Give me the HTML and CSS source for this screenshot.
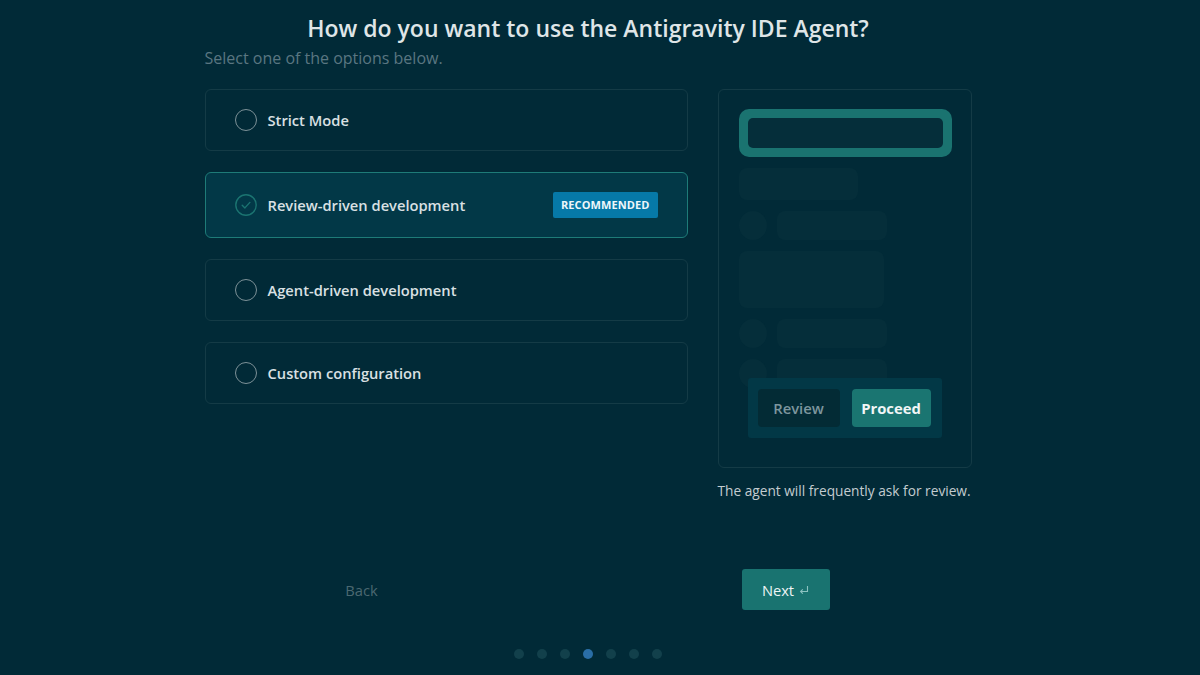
FILE: index.html
```html
<!DOCTYPE html>
<html lang="en">
<head>
<meta charset="utf-8">
<title>Antigravity IDE Agent setup</title>
<link rel="stylesheet" href="styles.css">
</head>
<body>
<main class="page">
  <h1 class="title">How do you want to use the Antigravity IDE Agent?</h1>
  <p class="subtitle">Select one of the options below.</p>

  <div class="content">
    <div class="options">
      <div class="option">
        <span class="radio"></span>
        <span class="label">Strict Mode</span>
      </div>
      <div class="option selected">
        <span class="radio checked">
          <svg viewBox="0 0 22 22" width="22" height="22"><circle cx="11" cy="11" r="10.2" fill="none" stroke="#1b7471" stroke-width="1.4"/><path d="M7.2 11.3 L9.9 13.9 L14.9 8.4" fill="none" stroke="#1b7471" stroke-width="1.4" stroke-linecap="round" stroke-linejoin="round"/></svg>
        </span>
        <span class="label">Review-driven development</span>
        <span class="badge">RECOMMENDED</span>
      </div>
      <div class="option">
        <span class="radio"></span>
        <span class="label">Agent-driven development</span>
      </div>
      <div class="option">
        <span class="radio"></span>
        <span class="label">Custom configuration</span>
      </div>
    </div>

    <aside class="preview-col">
      <div class="preview">
        <div class="sk-input"><div class="sk-input-inner"></div></div>
        <div class="sk sk-a"></div>
        <div class="sk-row"><div class="sk-dot"></div><div class="sk sk-line"></div></div>
        <div class="sk sk-block"></div>
        <div class="sk-row"><div class="sk-dot"></div><div class="sk sk-line"></div></div>
        <div class="sk-row"><div class="sk-dot"></div><div class="sk sk-line"></div></div>
        <div class="actions">
          <span class="btn-review">Review</span>
          <span class="btn-proceed">Proceed</span>
        </div>
      </div>
      <p class="caption">The agent will frequently ask for review.</p>
    </aside>
  </div>

  <div class="nav">
    <button class="back">Back</button>
    <button class="next">Next
      <svg class="enter" viewBox="0 0 10 10" width="10" height="10"><path d="M8.5 1 V6.5 H1.8 M3.8 4.4 L1.6 6.5 L3.8 8.6" fill="none" stroke="#8cc2c0" stroke-width="1.1"/></svg>
    </button>
  </div>

  <div class="dots">
    <span class="dot"></span><span class="dot"></span><span class="dot"></span><span class="dot active"></span><span class="dot"></span><span class="dot"></span><span class="dot"></span>
  </div>
</main>
</body>
</html>
```

FILE: styles.css
```css
* { box-sizing: border-box; }

html, body {
  margin: 0;
  height: 100%;
  background: #012a37;
}

body {
  font-family: "Open Sans", "Noto Sans", sans-serif;
  color: #d9e0e3;
}

.page {
  width: 791px;
  margin: 0 auto;
  padding: 14px 24px 0 0;
}

.title {
  margin: 0;
  text-align: center;
  font-size: 23px;
  line-height: 28px;
  font-weight: 600;
  color: #dfe5e7;
}

.subtitle {
  margin: 6px 0 0;
  font-size: 16px;
  line-height: 20px;
  color: #5a7681;
}

.content {
  display: flex;
  gap: 30px;
  margin-top: 21px;
  align-items: flex-start;
}

.options {
  width: 483px;
  display: flex;
  flex-direction: column;
  gap: 21px;
}

.option {
  display: flex;
  align-items: center;
  min-height: 62px;
  padding: 19px 29px;
  border: 1px solid #143b46;
  border-radius: 6px;
}

.option.selected {
  background: #023847;
  border-color: #1e7b78;
  min-height: 66px;
}

.radio {
  width: 22px;
  height: 22px;
  flex: none;
  border: 1.5px solid #7d9197;
  border-radius: 50%;
  margin-right: 11px;
}

.radio.checked {
  border: none;
}

.radio svg { display: block; }

.label {
  flex: 1;
  font-size: 14.7px;
  line-height: 22px;
  font-weight: 600;
  color: #d9e0e3;
}

.badge {
  background: #0679a8;
  color: #eef6fa;
  font-size: 11px;
  font-weight: 700;
  line-height: 26px;
  height: 26px;
  padding: 0 8px;
  border-radius: 2px;
  letter-spacing: 0.1px;
}

.preview-col {
  width: 254px;
}

.preview {
  position: relative;
  height: 379px;
  border: 1px solid #143b46;
  border-radius: 6px;
  padding: 19px 19px 0 20px;
  display: flex;
  flex-direction: column;
  gap: 11px;
}

.sk-input {
  width: 213px;
  height: 48px;
  background: #1a7370;
  border-radius: 10px;
  padding: 9px 9px;
}

.sk-input-inner {
  height: 100%;
  background: #052e3a;
  border-radius: 5px;
}

.sk {
  background: #052e3a;
  border-radius: 8px;
}

.sk-a { width: 119px; height: 32px; }

.sk-row {
  display: flex;
  gap: 10px;
}

.sk-dot {
  width: 28px;
  height: 29px;
  border-radius: 50%;
  background: #052e3a;
}

.sk-line { width: 110px; height: 29px; }

.sk-block { width: 145px; height: 57px; }

.actions {
  position: absolute;
  left: 29px;
  top: 288px;
  width: 194px;
  height: 60px;
  background: #023846;
  border-radius: 3px;
  display: flex;
  align-items: center;
  gap: 12px;
  padding: 0 11px 0 10px;
}

.btn-review, .btn-proceed {
  height: 38px;
  display: flex;
  align-items: center;
  justify-content: center;
  border-radius: 4px;
  font-size: 14.8px;
  font-weight: 600;
}

.btn-review {
  width: 82px;
  background: #032b35;
  color: #7d969e;
}

.btn-proceed {
  width: 79px;
  background: #1a7571;
  color: #f1f6f6;
  font-weight: 700;
}

.caption {
  margin: 14px 0 0;
  font-size: 13.7px;
  line-height: 18px;
  color: #c3ccd0;
}

.nav {
  display: flex;
  align-items: center;
  gap: 336px;
  margin-top: 69px;
  padding-left: 113px;
}

.nav button {
  font-family: inherit;
  border: none;
  width: 88px;
  height: 41px;
  border-radius: 3px;
  font-size: 14.7px;
  cursor: pointer;
  display: flex;
  align-items: center;
  justify-content: center;
  gap: 5px;
}

.back {
  background: transparent;
  color: #4b6871;
}

.next {
  background: #197370;
  color: #eef5f5;
  font-weight: 500;
}

.enter { display: block; }

.dots {
  display: flex;
  justify-content: center;
  gap: 13px;
  margin-top: 39px;
}

.dot {
  width: 10px;
  height: 10px;
  border-radius: 50%;
  background: #12404b;
}

.dot.active { background: #2a6ea6; }
```
